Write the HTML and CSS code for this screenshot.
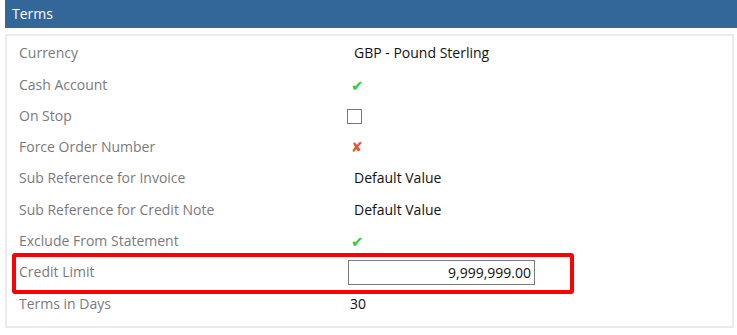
FILE: index.html
```html
<!DOCTYPE html>
<html>
  <head>
    <link rel="stylesheet" href="styles.css">
    <title>Terms</title>
  </head>
  <body>
    <div class="section">
      <h2 class="section-title">Terms</h2>
      <div class="panel">
        <div class="row">
          <span class="label">Currency</span>
          <span class="value">GBP - Pound Sterling</span>
        </div>
        <div class="row">
          <span class="label">Cash Account</span>
          <span class="value"><span class="tick">&#10004;</span></span>
        </div>
        <div class="row">
          <span class="label">On Stop</span>
          <span class="value"><span class="checkbox"></span></span>
        </div>
        <div class="row">
          <span class="label">Force Order Number</span>
          <span class="value"><span class="cross">&#10008;</span></span>
        </div>
        <div class="row">
          <span class="label">Sub Reference for Invoice</span>
          <span class="value">Default Value</span>
        </div>
        <div class="row">
          <span class="label">Sub Reference for Credit Note</span>
          <span class="value">Default Value</span>
        </div>
        <div class="row">
          <span class="label">Exclude From Statement</span>
          <span class="value"><span class="tick">&#10004;</span></span>
        </div>
        <div class="row highlight">
          <span class="label">Credit Limit</span>
          <span class="value"><input class="amount" type="text" value="9,999,999.00" /></span>
        </div>
        <div class="row">
          <span class="label">Terms in Days</span>
          <span class="value value-plain">30</span>
        </div>
      </div>
    </div>
  </body>
</html>
```

FILE: styles.css
```css
/* RESETS */
*,
*::before,
*::after {
  box-sizing: border-box;
}
html {
  font: 14px / 1.2 "Open Sans", "DejaVu Sans", sans-serif;
}
body {
  margin: 0;
  padding: 0 0 0 5px;
  background: #fff;
}
h2 {
  margin: 0;
}

/* Section header */
.section-title {
  height: 28px;
  padding: 6px 7px 0;
  background: #336699;
  color: #fff;
  font-size: 14px;
  font-weight: normal;
}

/* Panel */
.panel {
  margin: 6px 3px 0 0;
  border: 2px solid #ebebeb;
  padding: 2px 0 6px;
}
.row {
  position: relative;
  display: flex;
  align-items: center;
  height: 31.3px;
}
.label {
  width: 340px;
  padding-left: 12px;
  color: #7a7a7a;
}
.value {
  padding-left: 7px;
  color: #111;
  display: flex;
  align-items: center;
}
.value-plain {
  padding-left: 3px;
}
.tick {
  color: #2ecc40;
  font-size: 15px;
  margin-left: -3px;
}
.cross {
  color: #e2542a;
  font-size: 14px;
  margin-left: -3px;
}
.checkbox {
  display: inline-block;
  width: 15px;
  height: 15px;
  margin-left: -7px;
  border: 1px solid #777;
  background: #fff;
}
.amount {
  width: 187px;
  height: 25px;
  margin: 0 0 0 -6px;
  padding: 0 3px;
  border: 1px solid #7a7a7a;
  border-radius: 0;
  text-align: right;
  font: inherit;
  color: #111;
}

/* Annotation box round the credit limit row */
.highlight::after {
  content: "";
  position: absolute;
  left: 5px;
  top: -4px;
  width: 562px;
  height: 41px;
  border: 4px solid #ff0000;
  border-radius: 3px;
  pointer-events: none;
}
```
